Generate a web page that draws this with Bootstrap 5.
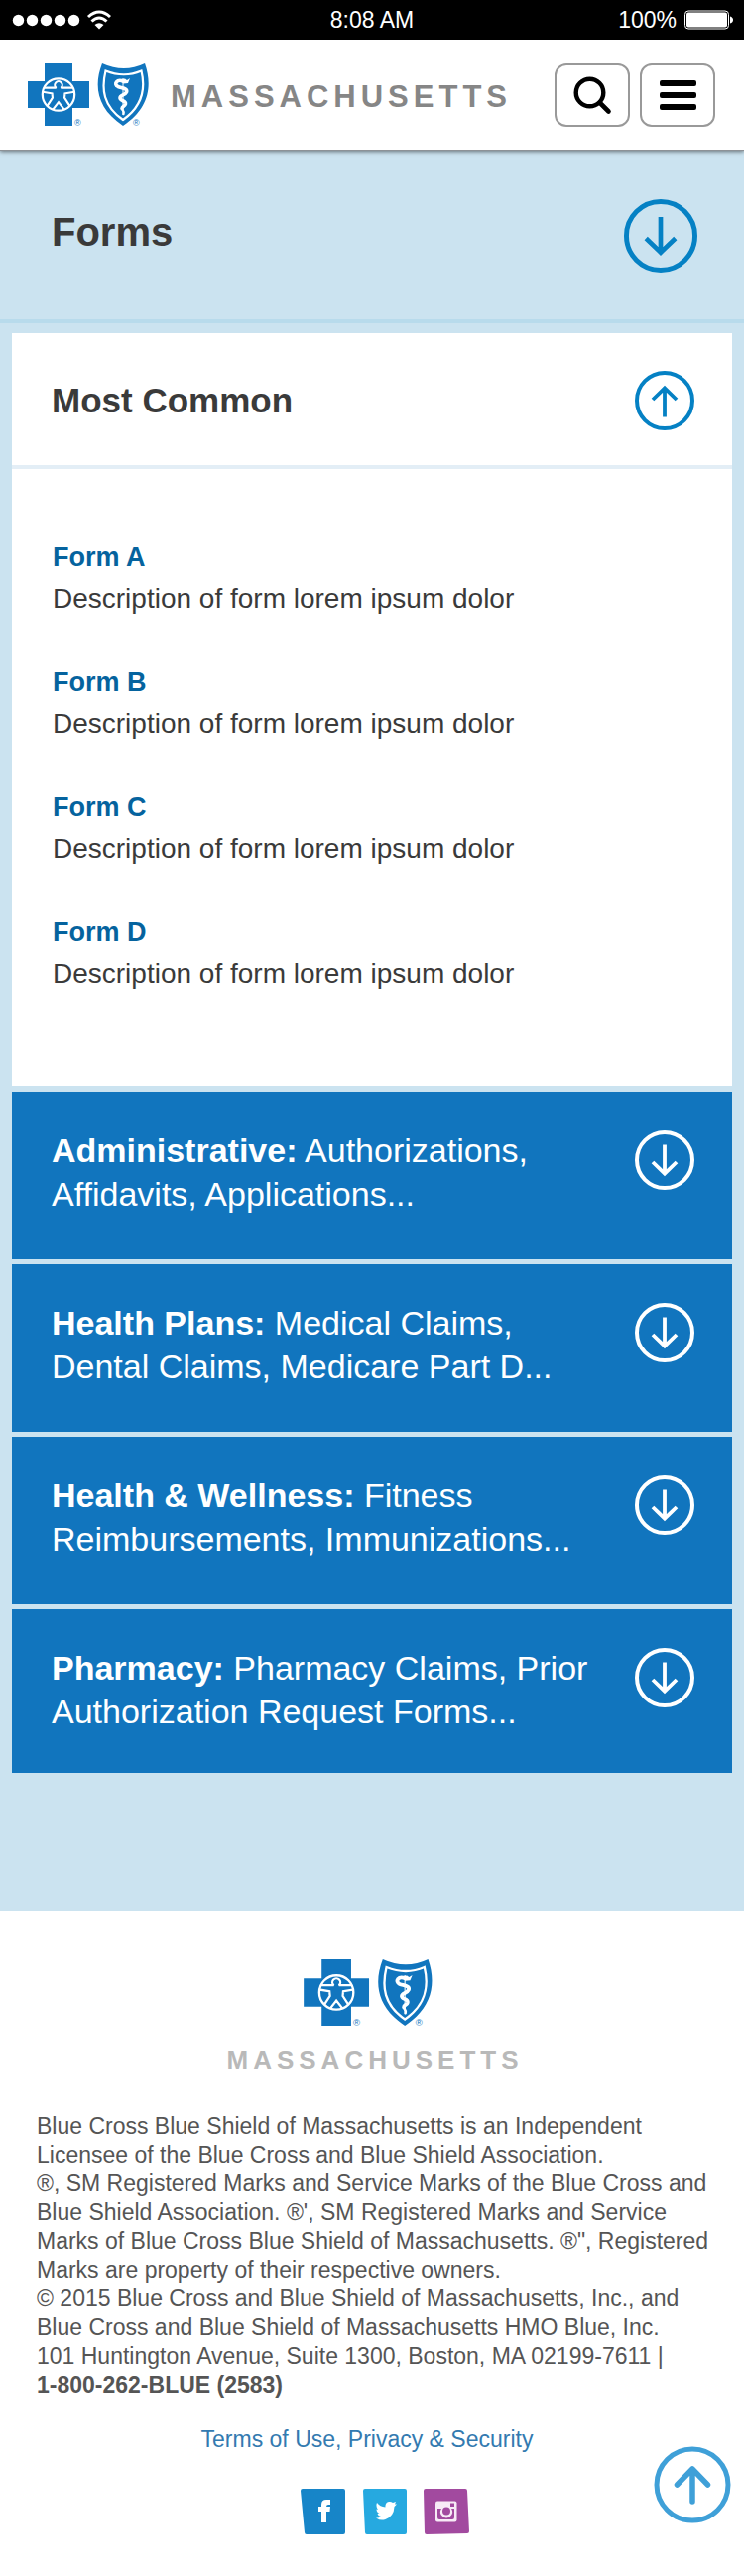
<!DOCTYPE html>
<html lang="en">
<head>
<meta charset="utf-8">
<meta name="viewport" content="width=device-width, initial-scale=1">
<title>Forms</title>
<link href="https://cdn.jsdelivr.net/npm/bootstrap@5.3.0/dist/css/bootstrap.min.css" rel="stylesheet">
<style>
  body { font-family: "Liberation Sans", Arial, sans-serif; background: #cbe3f0; color: #3a3a3a; }
  svg { display: block; flex: none; }
  .status-bar { height: 40px; font-size: 23px; line-height: 40px; padding: 0 11px; }
  .status-bar > * { flex: 1 1 0; }
  .site-header { padding: 24px 29px 23px 28px; border-bottom: 1px solid #8d9297; box-shadow: 0 1px 4px rgba(0, 0, 0, .5); }
  .brand { gap: 21px; }
  .tools { gap: 10px; }
  .brand-name { font-size: 31px; line-height: 36px; letter-spacing: 5px; font-weight: 700; color: #868686; }
  .brand-name-footer { font-size: 26px; line-height: 30px; color: #b9b9b9; padding-left: 5px; margin-top: 19px; }
  .tool-btn { width: 76px; height: 64px; padding: 0; border: 2px solid #999; border-radius: 12px; background: #fff; color: #000; }
  .page-title { padding: 49px 47px 47px 52px; border-bottom: 4px solid #b8dbec; }
  .page-title h1 { font-size: 40px; line-height: 44px; }
  .plain-btn { border: 0; padding: 0; background: none; color: #0581c4; }
  .panels { padding: 10px 12px 0; margin-bottom: 139px; }
  .panel-head { padding: 38px 38px 35px 40px; border-bottom: 4px solid #e3eef6; }
  .panel-head h2 { font-size: 35px; line-height: 40px; }
  .form-items { padding: 68px 40px 92px 41px; gap: 42px; line-height: 42px; font-size: 28px; }
  .form-items a { font-size: 27px; color: #05639e; }
  .categories { margin-top: 6px; row-gap: 5px; }
  .category { border: 0; padding: 37px 38px 44px 40px; background: #1175be; color: #fff; font-size: 34px; line-height: 44px; }
  .category:last-child { padding-bottom: 40px; }
  .category svg { margin-top: 2px; }
  .category-text { max-width: 560px; }
  .site-footer { padding: 49px 20px 42px 37px; color: #555; }
  .legal { font-size: 23px; line-height: 29px; margin: 37px 0 26px; }
  .terms { font-size: 23px; line-height: 28px; color: #337ab0; margin-right: 27px; }
  .social { gap: 16px; margin: 36px 0 0; padding-left: 10px; }
  .to-top { right: 13px; bottom: 53px; color: #3fa0d8; }
</style>
</head>
<body>
<svg width="0" height="0" class="position-absolute" aria-hidden="true">
  <defs>
    <clipPath id="ring"><circle cx="31" cy="31.500" r="16"/></clipPath>
    <symbol id="logo" viewBox="0 0 123 64">
      <path fill="#1175be" d="M17 0H45V18H62V45H45V63H17V45H0V18H17Z"/>
      <g clip-path="url(#ring)">
        <path fill="#1175be" stroke="#fff" stroke-width="4.200" stroke-linejoin="round" d="M13 25.700H28.500L29.300 24A2.700 2.700 0 1 1 32.700 24L33.500 25.700H49V27.300L36.500 29.500L36 35L45 49H40L31 37.500L22 49H17L26 35L25.500 29.500L13 27.300Z"/>
        <path fill="#1175be" d="M13 25.700H28.500L29.300 24A2.700 2.700 0 1 1 32.700 24L33.500 25.700H49V27.300L36.500 29.500L36 35L45 49H40L31 37.500L22 49H17L26 35L25.500 29.500L13 27.300Z"/>
      </g>
      <circle cx="31" cy="31.500" r="16.200" fill="none" stroke="#fff" stroke-width="2.200"/>
      <path fill="#1175be" d="M75 0Q97 10 118 0C126 23 122 46 96 63C70 46 66 23 75 0Z"/>
      <path fill="none" stroke="#fff" stroke-width="2.200" d="M78.500 7.500Q97 15 114.500 7.500C119 26 116 43 96 57C76 43 74 26 78.500 7.500Z"/>
      <path fill="none" stroke="#fff" stroke-width="1" d="M96 15V52"/>
      <path fill="none" stroke="#fff" stroke-width="3.600" stroke-linecap="round" d="M96 18C90 15.500 86 21 91 23.500C95 25 101 25 99.500 29C98 32.500 93 31.500 93 35C93.500 38.500 99 37 98.500 41C98 43.500 95 43 95 45.500"/>
      <path fill="none" stroke="#fff" stroke-width="2.400" stroke-linecap="round" d="M95 45.500C95 48 97.500 47.500 96.500 51"/>
      <path fill="#fff" d="M94 16L98 15.500L100 17L103 15L101 20L96 20.500Z"/>
      <g fill="#1175be" font-family="Liberation Sans" font-size="9"><text x="47" y="63">®</text><text x="106" y="63">®</text></g>
    </symbol>
    <symbol id="arrow-down" viewBox="0 0 60 60">
      <g fill="none" stroke="currentColor"><circle cx="30" cy="30" r="28" stroke-width="4"/><path stroke-width="3.800" d="M30 14.500V44M18 32L30 43.500L42 32"/></g>
    </symbol>
    <symbol id="arrow-up" viewBox="0 0 60 60">
      <g fill="none" stroke="currentColor"><circle cx="30" cy="30" r="28" stroke-width="4"/><path stroke-width="3.800" d="M30 46.500V17M18 29L30 17.500L42 29"/></g>
    </symbol>
  </defs>
</svg>

<div class="status-bar bg-black text-white d-flex align-items-center">
  <div>
    <svg width="102" height="24" viewBox="-2 0 102 24" role="img" aria-label="Signal and Wi-Fi">
      <g fill="#fff"><circle cx="5.500" cy="12.500" r="5.700"/><circle cx="19.500" cy="12.500" r="5.700"/><circle cx="33.500" cy="12.500" r="5.700"/><circle cx="47.500" cy="12.500" r="5.700"/><circle cx="61.500" cy="12.500" r="5.700"/><path d="M87 21.500L82.500 17Q87 13.500 91.500 17Z"/></g>
      <g fill="none" stroke="#fff" stroke-width="3"><path d="M76 9Q87 -1 98 9"/><path d="M79.500 13.500Q87 6.500 94.500 13.500"/></g>
    </svg>
  </div>
  <div class="text-center">8:08 AM</div>
  <div class="d-flex align-items-center justify-content-end gap-2">
    <span>100%</span>
    <svg width="49" height="20" viewBox="0 0 49 20" role="img" aria-label="Battery full"><rect x=".5" y="1" width="44" height="18" rx="3.500" fill="none" stroke="#fff"/><rect x="2" y="2.500" width="41" height="15" rx="2" fill="#fff"/><path fill="#fff" d="M46 6.500Q49 7.500 49 10T46 13.500Z"/></svg>
  </div>
</div>

<header class="site-header bg-white d-flex align-items-center position-relative">
  <a href="#" class="brand d-flex align-items-center text-decoration-none me-auto" aria-label="Massachusetts home">
    <svg width="123" height="64"><use href="#logo"/></svg>
    <span class="brand-name mt-1">MASSACHUSETTS</span>
  </a>
  <div class="tools d-flex">
    <button type="button" class="tool-btn d-flex align-items-center justify-content-center" aria-label="Search">
      <svg width="40" height="40" viewBox="0 0 40 40" fill="none" stroke="#000"><circle cx="17.500" cy="17.500" r="13.800" stroke-width="4.400"/><path d="M28 28L36.500 36.500" stroke-width="4.600" stroke-linecap="round"/></svg>
    </button>
    <button type="button" class="tool-btn d-flex align-items-center justify-content-center" aria-label="Menu">
      <svg width="37" height="30" viewBox="0 0 37 30"><rect width="37" height="6" rx="2"/><rect y="12" width="37" height="6" rx="2"/><rect y="24" width="37" height="6" rx="2"/></svg>
    </button>
  </div>
</header>

<main>
  <div class="page-title d-flex align-items-center justify-content-between">
    <h1 class="fw-bold mb-2">Forms</h1>
    <button type="button" class="plain-btn" aria-label="Expand forms"><svg width="74" height="74"><use href="#arrow-down"/></svg></button>
  </div>

  <div class="panels">
    <section class="bg-white">
      <div class="panel-head d-flex align-items-center justify-content-between">
        <h2 class="fw-bold m-0">Most Common</h2>
        <button type="button" class="plain-btn" aria-expanded="true" aria-controls="common" aria-label="Collapse Most Common"><svg width="60" height="60"><use href="#arrow-up"/></svg></button>
      </div>
      <div id="common" class="form-items d-flex flex-column">
        <div><a href="#" class="d-block fw-bold text-decoration-none">Form A</a><div>Description of form lorem ipsum dolor</div></div>
        <div><a href="#" class="d-block fw-bold text-decoration-none">Form B</a><div>Description of form lorem ipsum dolor</div></div>
        <div><a href="#" class="d-block fw-bold text-decoration-none">Form C</a><div>Description of form lorem ipsum dolor</div></div>
        <div><a href="#" class="d-block fw-bold text-decoration-none">Form D</a><div>Description of form lorem ipsum dolor</div></div>
      </div>
    </section>
    <div class="categories d-grid">
      <button type="button" class="category d-flex justify-content-between align-items-start text-start"><span class="category-text"><b>Administrative:</b> Authorizations,<br>Affidavits, Applications...</span><svg width="60" height="60"><use href="#arrow-down"/></svg></button>
      <button type="button" class="category d-flex justify-content-between align-items-start text-start"><span class="category-text"><b>Health Plans:</b> Medical Claims,<br>Dental Claims, Medicare Part D...</span><svg width="60" height="60"><use href="#arrow-down"/></svg></button>
      <button type="button" class="category d-flex justify-content-between align-items-start text-start"><span class="category-text"><b>Health &amp; Wellness:</b> Fitness<br>Reimbursements, Immunizations...</span><svg width="60" height="60"><use href="#arrow-down"/></svg></button>
      <button type="button" class="category d-flex justify-content-between align-items-start text-start"><span class="category-text"><b>Pharmacy:</b> Pharmacy Claims, Prior<br>Authorization Request Forms...</span><svg width="60" height="60"><use href="#arrow-down"/></svg></button>
    </div>
  </div>
</main>

<footer class="site-footer bg-white position-relative">
  <div class="d-flex flex-column align-items-center me-3">
    <svg class="me-2" width="131" height="68"><use href="#logo"/></svg>
    <span class="brand-name brand-name-footer">MASSACHUSETTS</span>
  </div>
  <p class="legal">Blue Cross Blue Shield of Massachusetts is an Independent<br>Licensee of the Blue Cross and Blue Shield Association.<br>®, SM Registered Marks and Service Marks of the Blue Cross and<br>Blue Shield Association. ®', SM Registered Marks and Service<br>Marks of Blue Cross Blue Shield of Massachusetts. ®", Registered<br>Marks are property of their respective owners.<br>© 2015 Blue Cross and Blue Shield of Massachusetts, Inc., and<br>Blue Cross and Blue Shield of Massachusetts HMO Blue, Inc.<br>101 Huntington Avenue, Suite 1300, Boston, MA 02199-7611 |<br><b>1-800-262-BLUE (2583)</b></p>
  <div class="text-center"><a href="#" class="terms d-block text-decoration-none">Terms of Use, Privacy &amp; Security</a></div>
  <div class="social d-flex justify-content-center">
    <a href="#" aria-label="Facebook"><svg width="46" height="46" viewBox="0 0 46 46"><path fill="#1785c8" d="M2 0H43Q45 0 45 2V44Q45 46 43 46H6Q4 46 4 44L0 2Q0 0 2 0Z"/><path fill="#fff" d="M21 34V23H18V18H21V16Q21 11 26 11H30V16H28Q26 16 26 18H30L29.500 23H26V34Z"/></svg></a>
    <a href="#" aria-label="Twitter"><svg width="46" height="46" viewBox="0 0 46 46"><path fill="#26a9e0" d="M3 0H43Q45 0 45 2V44Q45 46 43 46H5Q3 46 3 44L1 2Q1 0 3 0Z"/><path fill="#fff" d="M15 14Q18 18 23.500 18.500Q23 14 27 13Q29 12.500 31 14L34 13L33 15.500L35 15.500L32.500 18Q32 28 23.500 31Q18 32.500 14 29.500Q17 29.500 19 28Q16 27.500 15.500 25H17.500Q14.500 23.500 14.500 20.500L16 21Q13.500 17.500 15 14Z"/></svg></a>
    <a href="#" aria-label="Instagram"><svg width="47" height="46" viewBox="0 0 47 46"><path fill="#a24a9f" d="M2 0H42Q44 0 44 2L46 43Q46 45 44 45L3 46Q1 46 1 44L0 2Q0 0 2 0Z"/><rect x="12" y="12.500" width="21.500" height="21" rx="2" fill="#f7eaf6"/><path fill="#a24a9f" d="M14 20H18A6 6 0 1 0 28 20H31V29Q31 31 29 31H16Q14 31 14 29Z"/><circle cx="23" cy="22.500" r="4" fill="#a24a9f"/><rect x="27" y="14.500" width="4" height="3.500" fill="#a24a9f"/></svg></a>
  </div>
  <a href="#" class="to-top position-absolute" aria-label="Back to top"><svg width="78" height="78" viewBox="0 0 78 78" fill="none" stroke="currentColor"><circle cx="39" cy="39" r="36" stroke-width="5"/><path stroke-width="5.500" stroke-linecap="round" stroke-linejoin="round" d="M39 56V23M23.500 39L39 23L54.500 39"/></svg></a>
</footer>
<script src="https://cdn.jsdelivr.net/npm/bootstrap@5.3.0/dist/js/bootstrap.bundle.min.js"></script>
</body>
</html>
